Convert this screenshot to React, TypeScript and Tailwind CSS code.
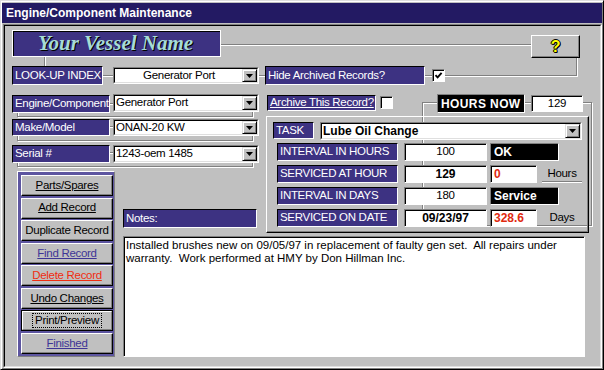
import React from 'react';

function Caret() {
  return (
    <svg width="7" height="4" viewBox="0 0 7 4">
      <path d="M0 0h7L3.5 4z" fill="#000" />
    </svg>
  );
}

function Combo({ className, textClass, children }: { className: string; textClass?: string; children: React.ReactNode }) {
  return (
    <div className={`relative flex bg-white border border-t-[#808080] border-l-[#808080] border-b-white border-r-white ${className}`}>
      <div className="flex flex-1 border border-t-black border-l-black border-b-[#dfdfdf] border-r-[#dfdfdf]">
        <div className={`flex flex-1 items-center pl-[1px] whitespace-nowrap ${textClass ?? ''}`}>{children}</div>
        <div className="flex w-[15px] items-center justify-center bg-[#c0c0c0] border border-t-[#dfdfdf] border-l-[#dfdfdf] border-b-black border-r-black shadow-[inset_1px_1px_0_#fff,inset_-1px_-1px_0_#808080]">
          <Caret />
        </div>
      </div>
    </div>
  );
}

function Lbl({ className, children }: { className: string; children: React.ReactNode }) {
  return (
    <div className={`relative flex items-center whitespace-nowrap bg-[#3d3282] pl-[2px] text-white border border-t-black border-l-black border-b-white border-r-white ${className}`}>
      {children}
    </div>
  );
}

function Check({ checked, className }: { checked?: boolean; className: string }) {
  return (
    <div className={`relative flex h-[13px] w-[13px] items-center justify-center bg-white border border-t-[#808080] border-l-[#808080] border-b-white border-r-white shadow-[inset_1px_1px_0_#000] ${className}`}>
      {checked && (
        <svg width="9" height="9" viewBox="0 0 9 9">
          <path d="M1.5 4.2L3.6 6.4L7.6 1.8" stroke="#000" strokeWidth="1.9" fill="none" />
        </svg>
      )}
    </div>
  );
}

function Field({ className, children }: { className: string; children?: React.ReactNode }) {
  return (
    <div className={`relative flex items-center border border-t-[#808080] border-l-[#808080] border-b-white border-r-white shadow-[inset_1px_1px_0_#000] ${className}`}>
      {children}
    </div>
  );
}

const buttons = [
  { label: 'Parts/Spares', cls: 'underline text-black' },
  { label: 'Add Record', cls: 'underline text-black' },
  { label: 'Duplicate Record', cls: 'text-black' },
  { label: 'Find Record', cls: 'underline text-[#3e3596]' },
  { label: 'Delete Record', cls: 'underline text-[#f02c10]' },
  { label: 'Undo Changes', cls: 'underline text-black' },
  { label: 'Print/Preview', cls: 'text-black', focus: true },
  { label: 'Finished', cls: 'underline text-[#3e3596]' },
];

const rows = [
  { label: 'INTERVAL IN HOURS', value: '100', bold: false, kind: 'black', status: 'OK' },
  { label: 'SERVICED AT HOUR', value: '129', bold: true, kind: 'red', status: '0', unit: 'Hours' },
  { label: 'INTERVAL IN DAYS', value: '180', bold: false, kind: 'black', status: 'Service' },
  { label: 'SERVICED ON DATE', value: '09/23/97', bold: true, kind: 'red', status: '328.6', unit: 'Days' },
];

export default function App() {
  return (
    <div className="flex h-[370px] w-[604px] flex-col overflow-hidden bg-[#c0c0c0] p-[1px] border border-t-[#dfdfdf] border-l-[#dfdfdf] border-b-black border-r-black font-['Liberation_Sans',Arial,sans-serif] text-[11.5px] tracking-[-0.3px] text-black shadow-[inset_1px_1px_0_#fff,inset_-1px_-1px_0_#808080]">
      {/* Title bar */}
      <div className="mt-[1px] flex h-[20px] shrink-0 items-center bg-[#231a63] pl-[4px] text-[12px] font-bold tracking-normal text-white">
        Engine/Component Maintenance
      </div>

      <div className="ml-[1px] mt-[1px] flex flex-1 border border-t-[#808080] border-l-[#808080] border-b-white border-r-white">
        <div className="relative flex-1 pl-[7px] pt-[4px] border border-t-black border-l-black border-b-[#dfdfdf] border-r-[#dfdfdf]">
          {/* etched connector frames */}
          <div className="absolute left-[39px] top-[18px] h-[32px] w-[533px] border border-[#808080] shadow-[inset_1px_1px_0_#fff,1px_1px_0_#fff]" />
          <div className="absolute left-[417px] top-[76px] h-[124px] w-[170px] border border-[#808080] shadow-[inset_1px_1px_0_#fff,1px_1px_0_#fff]" />

          {/* Vessel row */}
          <div className="flex items-start">
            <div className="relative flex h-[27px] w-[209px] items-center bg-[#3d3282] pl-[25px] border border-white shadow-[inset_1px_1px_0_#000]">
              <span className="font-['Liberation_Serif',serif] text-[21px] font-bold italic tracking-normal text-[#a6dcd6] [text-shadow:1px_1px_0_#000]">
                Your Vessel Name
              </span>
            </div>
            <div className="relative ml-[310px] mt-[5px] flex h-[23px] w-[49px] items-center justify-center bg-[#c0c0c0] border border-t-white border-l-white border-b-black border-r-black shadow-[inset_-1px_-1px_0_#808080]">
              <span className="text-[16px] font-bold leading-none text-[#ffff00] [text-shadow:1px_0_0_#000,-1px_0_0_#000,0_1px_0_#000,0_-1px_0_#000,1px_1px_0_#000]">
                ?
              </span>
            </div>
          </div>

          {/* Look-up row */}
          <div className="mt-[8px] flex items-start">
            <Lbl className="h-[19px] w-[91px]">LOOK-UP INDEX</Lbl>
            <Combo className="ml-[10px] mt-[1px] h-[17px] w-[146px]" textClass="justify-center">Generator Port</Combo>
            <Lbl className="ml-[6px] h-[19px] w-[160px]">Hide Archived Records?</Lbl>
            <Check checked className="ml-[7px] mt-[3px]" />
          </div>

          {/* Main grid */}
          <div className="mt-[9px] grid grid-cols-[106px_144px_328px] grid-rows-[22px_25px_25px_40px_27px_124px]">
            <div className="relative col-span-2 col-start-1 row-start-1 flex items-start">
              <div className="absolute left-[5px] top-[9px] h-[14px] w-[236px] border border-[#808080] shadow-[inset_1px_1px_0_#fff,1px_1px_0_#fff]" />
              <Lbl className="mt-[1px] h-[18px] w-[98px]">Engine/Component</Lbl>
              <Combo className="ml-[3px] h-[18px] w-[146px]">Generator Port</Combo>
            </div>

            <div className="col-start-3 row-start-1 flex items-start pl-[5px]">
              <Lbl className="mt-[1px] h-[16px] w-[109px] underline">Archive This Record?</Lbl>
              <Check className="ml-[4px] mt-[2px]" />
              <Field className="ml-[44px] h-[19px] w-[88px] bg-black pl-[3px] text-[12px] font-bold tracking-[0.4px] text-white">
                HOURS NOW
              </Field>
              <Field className="ml-[6px] mt-[1px] h-[17px] w-[52px] justify-center bg-white">129</Field>
            </div>

            <div className="relative col-span-2 col-start-1 row-start-2 flex items-start">
              <div className="absolute left-[5px] top-[10px] h-[15px] w-[236px] border border-[#808080] shadow-[inset_1px_1px_0_#fff,1px_1px_0_#fff]" />
              <Lbl className="mt-[3px] h-[17px] w-[98px]">Make/Model</Lbl>
              <Combo className="ml-[3px] mt-[3px] h-[17px] w-[146px]">ONAN-20 KW</Combo>
            </div>

            <div className="relative col-span-2 col-start-1 row-start-3 flex items-start">
              <div className="absolute left-[5px] top-[11px] h-[15px] w-[236px] border border-[#808080] shadow-[inset_1px_1px_0_#fff,1px_1px_0_#fff]" />
              <Lbl className="mt-[4px] h-[18px] w-[98px]">Serial #</Lbl>
              <Combo className="ml-[3px] mt-[4px] h-[18px] w-[146px]">1243-oem 1485</Combo>
            </div>

            {/* Task panel */}
            <div className="relative col-start-3 row-span-4 row-start-2 ml-[4px] flex h-[117px] w-[323px] flex-col pl-[6px] pt-[5px] border border-t-white border-l-white border-b-black border-r-black shadow-[inset_-1px_-1px_0_#808080]">
              <div className="flex items-start">
                <Lbl className="h-[17px] w-[41px]">TASK</Lbl>
                <Combo className="ml-[6px] h-[18px] w-[262px]" textClass="text-[12px] font-bold tracking-normal">
                  Lube Oil Change
                </Combo>
              </div>
              <div className="mt-[3px] flex flex-col gap-[4px] pl-[4px]">
                {rows.map((r) => (
                  <div key={r.label} className="flex h-[18px] items-stretch">
                    <Lbl className="w-[121px]">{r.label}</Lbl>
                    <Field className={`ml-[6px] w-[83px] justify-center bg-white ${r.bold ? 'text-[12px] font-bold tracking-normal' : ''}`}>
                      {r.value}
                    </Field>
                    {r.kind === 'black' ? (
                      <Field className="ml-[3px] w-[69px] bg-black pl-[3px] text-[12px] font-bold tracking-normal text-white">
                        {r.status}
                      </Field>
                    ) : (
                      <>
                        <Field className="ml-[3px] w-[47px] bg-white pl-[3px] text-[12px] font-bold tracking-normal text-[#e02a10]">
                          {r.status}
                        </Field>
                        <div className="ml-[5px] flex w-[40px] items-center justify-center border-b border-white shadow-[inset_0_-1px_0_#808080]">
                          {r.unit}
                        </div>
                      </>
                    )}
                  </div>
                ))}
              </div>
            </div>

            {/* Command buttons */}
            <div className="relative col-start-1 row-span-3 row-start-4 ml-[5px] mt-[5px] flex h-[186px] w-[98px] flex-col justify-between bg-[#5d55a0] pb-[2px] pl-[3px] pr-[1px] pt-[3px] border border-t-white border-l-white border-b-[#808080] border-r-[#808080]">
              {buttons.map((b) =>
                b.focus ? (
                  <div key={b.label} className="flex h-[21px] border border-black">
                    <div className="flex flex-1 items-center justify-center bg-[#c0c0c0] border border-t-white border-l-white border-b-[#808080] border-r-[#808080]">
                      <span className={`border border-dotted border-black px-[2px] leading-[13px] ${b.cls}`}>{b.label}</span>
                    </div>
                  </div>
                ) : (
                  <div
                    key={b.label}
                    className="flex h-[21px] items-center justify-center bg-[#c0c0c0] border border-t-white border-l-white border-b-black border-r-black shadow-[inset_-1px_-1px_0_#808080]"
                  >
                    <span className={b.cls}>{b.label}</span>
                  </div>
                )
              )}
            </div>

            <Lbl className="col-start-2 row-start-5 ml-[5px] mt-[3px] h-[19px] w-[134px]">Notes:</Lbl>

            <Field className="col-span-2 col-start-2 row-start-6 ml-[5px] mt-[3px] h-[121px] w-[462px] items-start bg-white pl-[2px] pr-[8px] pt-[2px] leading-[13px] tracking-normal">
              Installed brushes new on 09/05/97 in replacement of faulty gen set.&nbsp; All repairs under warranty.&nbsp; Work performed at HMY by Don Hillman Inc.
            </Field>
          </div>
        </div>
      </div>
    </div>
  );
}
